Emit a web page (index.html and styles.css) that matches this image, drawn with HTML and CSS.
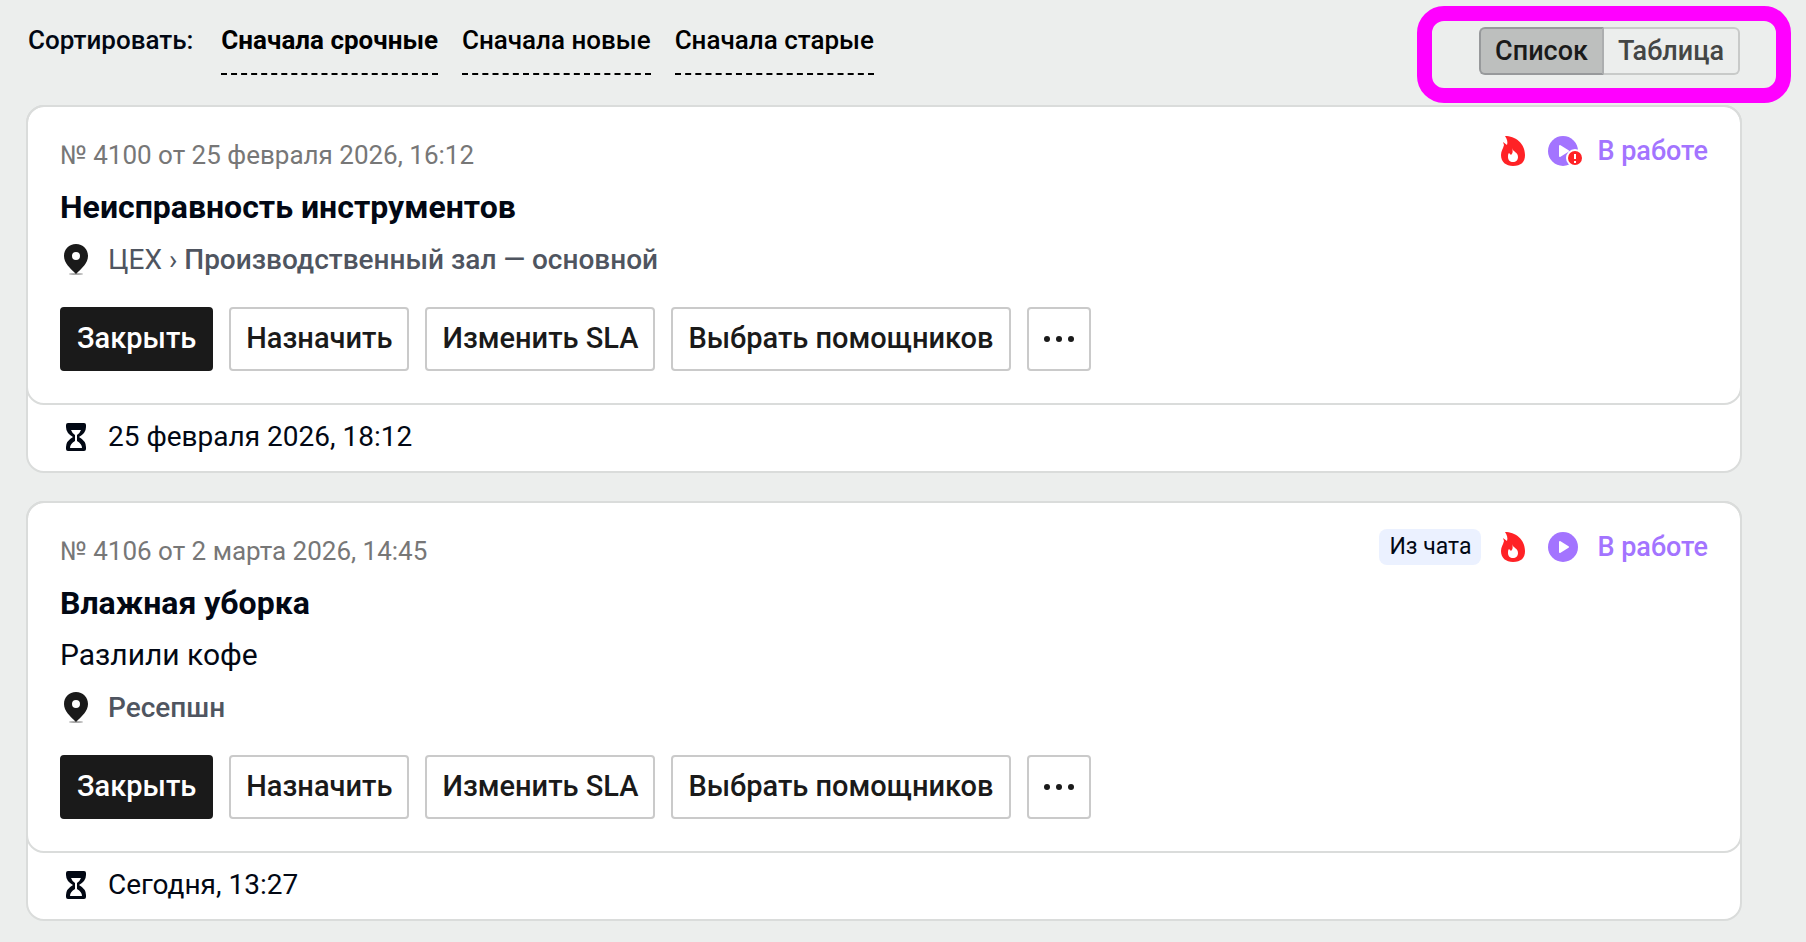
FILE: index.html
```html
<!DOCTYPE html>
<html lang="ru">
<head>
    <meta charset="UTF-8">
    <meta name="viewport" content="width=device-width, initial-scale=1.0">
    <title>Заявки</title>
    <link rel="stylesheet" href="styles.css">
</head>
<body>

<!-- Shared icons -->
<svg class="sprite" aria-hidden="true">
    <symbol id="icon-fire" viewBox="0 0 32 32">
        <path fill="#ff2226" d="M8 1C18 1 28 8 28 20C28 27 24 31 16 31C9 31 4 27 4 20C4 16 6 14 7 10L6 7L10 10C11 7 10 4 8 1Z"/>
        <path fill="#fff" d="M15 13C16 17 21 17 21 22C21 25 19 27 16 27C13 27 11 25 11 22C11 20 11 19 12 18L14 20C16 18 16 16 15 13Z"/>
    </symbol>
    <symbol id="icon-play" viewBox="0 0 36 36">
        <circle cx="18" cy="18" r="15" fill="#a374ff"/>
        <path d="M15 13L23 18L15 23Z" fill="#fff" stroke="#fff" stroke-width="2" stroke-linejoin="round"/>
    </symbol>
    <symbol id="icon-pin" viewBox="0 0 32 32">
        <ellipse cx="16" cy="30" rx="7" ry="1" fill="#aaa"/>
        <path fill="#1a1a1a" fill-rule="evenodd" d="M16 0C9 0 4 5 4 12C4 19 10 24 16 30C22 24 28 19 28 12C28 5 23 0 16 0ZM16 8A4 4 0 1 1 16 16A4 4 0 1 1 16 8Z"/>
    </symbol>
    <symbol id="icon-hourglass" viewBox="0 0 32 32">
        <path fill="#020814" d="M8 2H24Q26 2 26 4V6Q26 12 19 16Q26 20 26 26V28Q26 30 24 30H8Q6 30 6 28V26Q6 20 13 16Q6 12 6 6V4Q6 2 8 2Z"/>
        <path fill="#fff" d="M11 9H21Q20 12 17 14V20Q22 23 22 27H10Q10 23 15 20V14Q12 12 11 9Z"/>
    </symbol>
</svg>

<main class="page">
    <div class="toolbar">
        <nav class="sort">
            <span class="sort-label">Сортировать:</span>
            <a href="#" class="sort-link active">Сначала срочные</a>
            <a href="#" class="sort-link">Сначала новые</a>
            <a href="#" class="sort-link">Сначала старые</a>
        </nav>
        <div class="view-toggle">
            <button type="button" class="toggle-btn selected" aria-pressed="true">Список</button>
            <button type="button" class="toggle-btn" aria-pressed="false">Таблица</button>
        </div>
    </div>

    <article class="card">
        <div class="card-body">
            <div class="card-top">
                <div class="number">№ 4100 от 25 февраля 2026, 16:12</div>
                <div class="status">
                    <svg class="icon"><use href="#icon-fire"/></svg>
                    <svg class="icon-status" viewBox="0 0 36 36">
                        <use href="#icon-play"/>
                        <circle cx="30" cy="25" r="9" fill="#fff"/>
                        <circle cx="30" cy="25" r="7" fill="#ff2226"/>
                        <path d="M30 21V26M30 28V30" stroke="#fff" stroke-width="2"/>
                    </svg>
                    <span class="status-text">В работе</span>
                </div>
            </div>
            <h2 class="title">Неисправность инструментов</h2>
            <div class="location">
                <svg class="icon"><use href="#icon-pin"/></svg>
                <span>ЦЕХ › <b>Производственный зал — основной</b></span>
            </div>
            <div class="actions">
                <button type="button" class="btn btn-dark">Закрыть</button>
                <button type="button" class="btn">Назначить</button>
                <button type="button" class="btn">Изменить SLA</button>
                <button type="button" class="btn">Выбрать помощников</button>
                <button type="button" class="btn btn-more" aria-label="Ещё">
                    <svg class="icon" viewBox="0 0 32 32" fill="#1a1a1a"><circle cx="4" cy="16" r="3"/><circle cx="16" cy="16" r="3"/><circle cx="28" cy="16" r="3"/></svg>
                </button>
            </div>
        </div>
        <div class="deadline">
            <svg class="icon"><use href="#icon-hourglass"/></svg>
            <span>25 февраля 2026, 18:12</span>
        </div>
    </article>

    <article class="card">
        <div class="card-body">
            <div class="card-top">
                <div class="number">№ 4106 от 2 марта 2026, 14:45</div>
                <div class="status">
                    <span class="chip">Из чата</span>
                    <svg class="icon"><use href="#icon-fire"/></svg>
                    <svg class="icon-status"><use href="#icon-play"/></svg>
                    <span class="status-text">В работе</span>
                </div>
            </div>
            <h2 class="title">Влажная уборка</h2>
            <p class="description">Разлили кофе</p>
            <div class="location">
                <svg class="icon"><use href="#icon-pin"/></svg>
                <b>Ресепшн</b>
            </div>
            <div class="actions">
                <button type="button" class="btn btn-dark">Закрыть</button>
                <button type="button" class="btn">Назначить</button>
                <button type="button" class="btn">Изменить SLA</button>
                <button type="button" class="btn">Выбрать помощников</button>
                <button type="button" class="btn btn-more" aria-label="Ещё">
                    <svg class="icon" viewBox="0 0 32 32" fill="#1a1a1a"><circle cx="4" cy="16" r="3"/><circle cx="16" cy="16" r="3"/><circle cx="28" cy="16" r="3"/></svg>
                </button>
            </div>
        </div>
        <div class="deadline">
            <svg class="icon"><use href="#icon-hourglass"/></svg>
            <span>Сегодня, 13:27</span>
        </div>
    </article>
</main>

</body>
</html>
```

FILE: styles.css
```css
* {
    box-sizing: border-box;
}
body {
    margin: 0;
    background-color: #eceeed;
    color: #020814;
    font-family: Roboto, sans-serif;
    font-size: 28px;
}
button {
    font-family: inherit;
    cursor: pointer;
}
.sprite {
    position: absolute;
    width: 0;
    height: 0;
}
.icon {
    width: 32px;
    height: 32px;
    flex: none;
}
.icon-status {
    width: 36px;
    height: 36px;
    flex: none;
    overflow: visible;
}
.page {
    padding: 7px 64px 20px 26px;
}

/* Toolbar */
.toolbar {
    display: flex;
    justify-content: space-between;
    align-items: flex-start;
    margin-bottom: 30px;
    padding: 0 2px;
}
.sort {
    display: flex;
    gap: 24px;
    padding-top: 1px;
    font-size: 26px;
    font-weight: 500;
    line-height: 65px;
}
.sort-label {
    margin-right: 4px;
}
.sort-link {
    color: #000;
    text-decoration: none;
    border-bottom: 2px dashed #000;
}
.sort-link.active {
    font-weight: 700;
}
.view-toggle {
    position: relative;
    display: flex;
    margin-top: 20px;
}
.view-toggle::after {
    content: "";
    position: absolute;
    inset: -21px -51px -28px -62px;
    border: 15px solid #ff00ff;
    border-radius: 27px;
    pointer-events: none;
}
.toggle-btn {
    height: 48px;
    padding: 0 14px;
    border: 2px solid #c8cac9;
    border-left: 0;
    border-radius: 0 6px 6px 0;
    background: transparent;
    color: #444645;
    font-size: 27px;
    font-weight: 500;
}
.toggle-btn.selected {
    border: 2px solid #97999b;
    border-right-color: #acaeaf;
    border-radius: 6px 0 0 6px;
    background-color: #bdbfbe;
    color: #1a1a1a;
}

/* Cards */
.card {
    margin-bottom: 28px;
    border: 2px solid #dadcdb;
    border-radius: 18px;
    background-color: #fff;
}
.card-body {
    margin: -2px -2px 0;
    padding: 22px 32px 32px;
    border: 2px solid #dadcdb;
    border-radius: 18px;
}
.card-top {
    display: flex;
    justify-content: space-between;
    align-items: flex-start;
    line-height: 52px;
}
.number {
    color: #777;
    font-size: 26px;
}
.status {
    display: flex;
    align-items: center;
    gap: 16px;
    height: 44px;
}
.status-text {
    color: #a374ff;
    font-size: 27px;
    font-weight: 500;
}
.chip {
    padding: 0 10px;
    border-radius: 8px;
    background-color: #ebf1ff;
    font-size: 23px;
    line-height: 36px;
}
.title {
    margin: 0;
    font-size: 32px;
    font-weight: 700;
    line-height: 52px;
}
.description {
    margin: 0;
    font-size: 30px;
    line-height: 52px;
}
.location {
    display: flex;
    align-items: center;
    gap: 16px;
    color: #4f5560;
    line-height: 54px;
}
.location b {
    font-weight: 500;
}
.actions {
    display: flex;
    gap: 16px;
    margin-top: 20px;
}
.btn {
    height: 64px;
    padding: 0 15px 2px;
    border: 2px solid #cacaca;
    border-radius: 4px;
    background-color: #fff;
    color: #1a1a1a;
    font-size: 29px;
    font-weight: 500;
}
.btn-dark {
    border-color: #1a1a1a;
    background-color: #1a1a1a;
    color: #fff;
}
.btn-more {
    display: flex;
    align-items: center;
    padding: 0 14px;
}
.deadline {
    display: flex;
    align-items: center;
    gap: 16px;
    padding: 0 32px 3px;
    line-height: 63px;
}
```
